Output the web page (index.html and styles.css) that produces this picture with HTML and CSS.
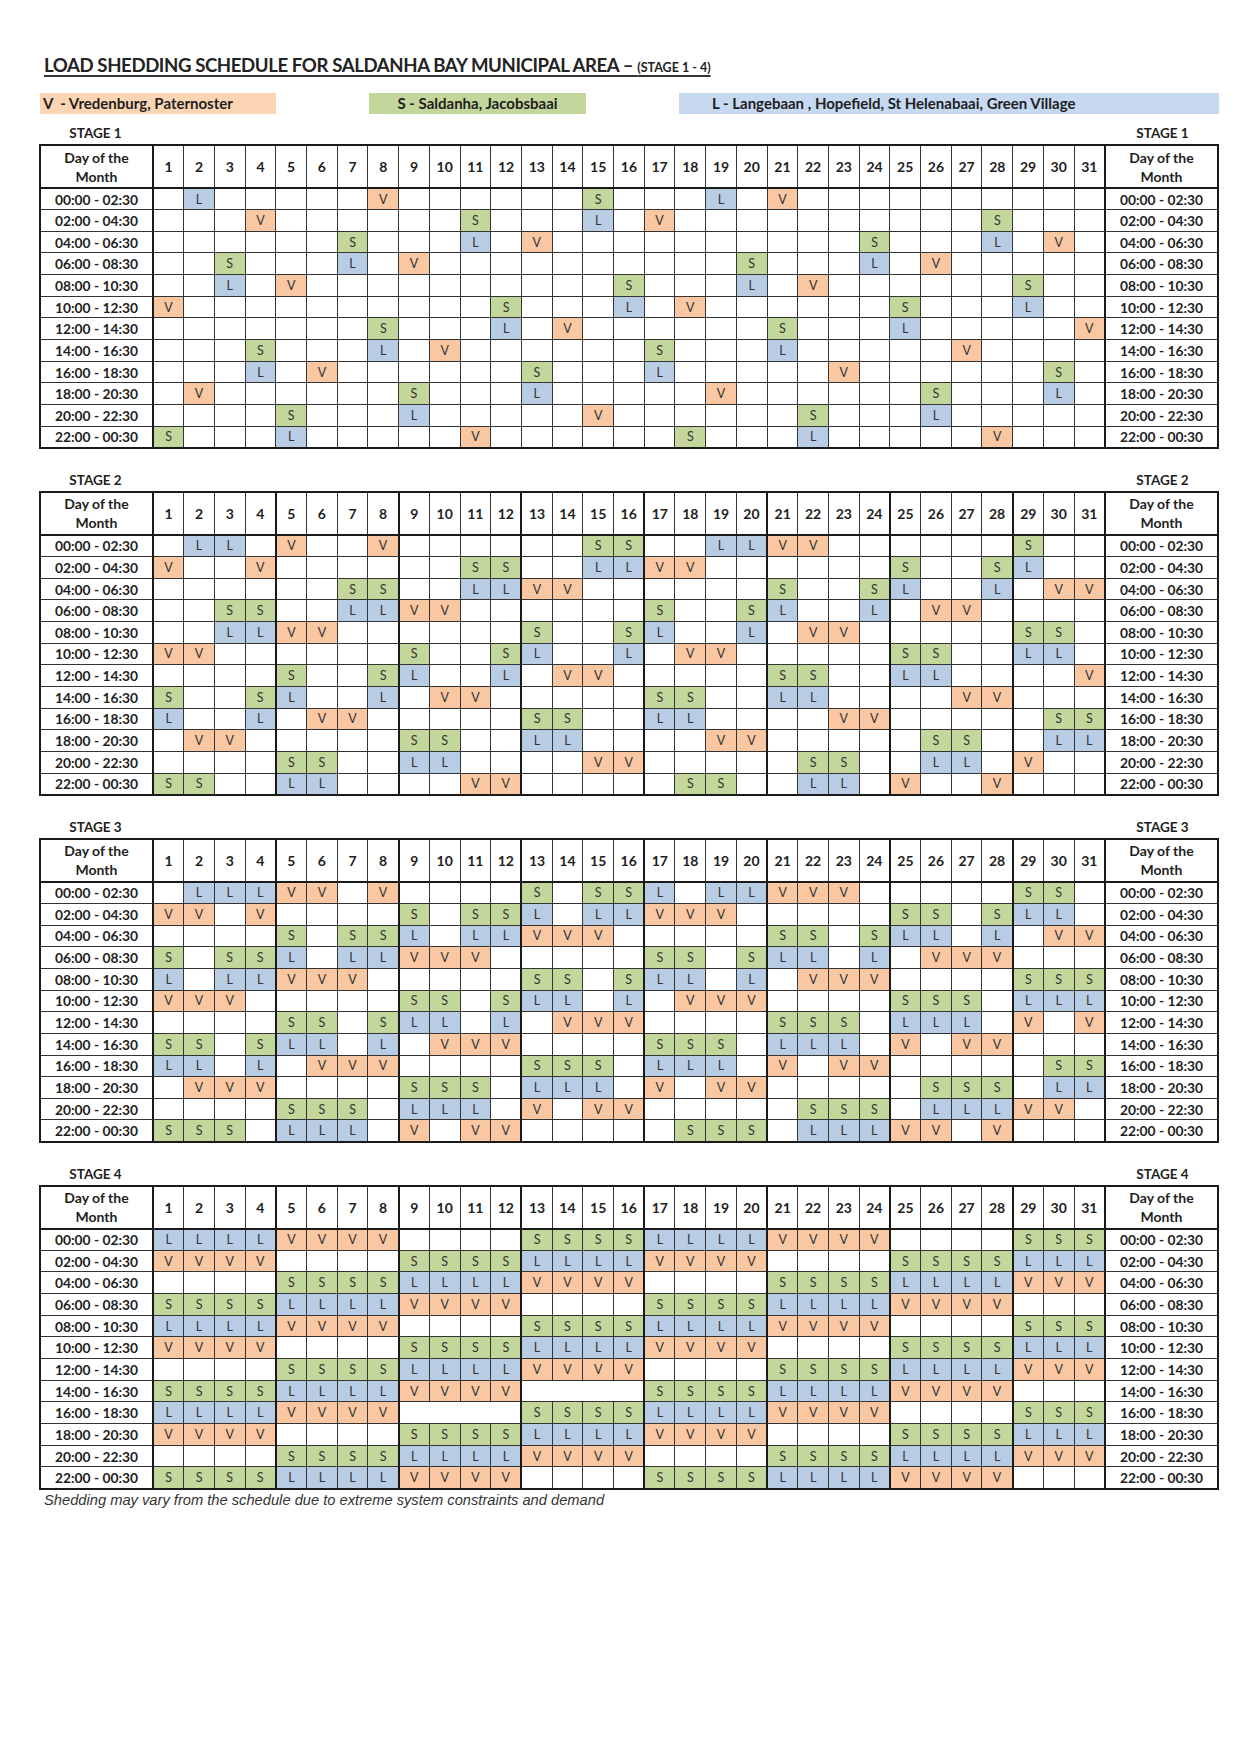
FILE: index.html
```html
<!DOCTYPE html>
<html lang="en">
<head>
<meta charset="utf-8">
<title>Load Shedding Schedule - Saldanha Bay Municipal Area</title>
<link rel="stylesheet" href="styles.css">
</head>
<body>
<main class="page">
  <h1 class="title"><span class="t-main">LOAD SHEDDING SCHEDULE FOR SALDANHA BAY MUNICIPAL AREA – </span><span class="t-sub">(STAGE 1 - 4)</span></h1>
  <div class="legend">
    <div class="lg lg-v">V&nbsp; - Vredenburg, Paternoster</div>
    <div class="lg lg-s">S - Saldanha, Jacobsbaai</div>
    <div class="lg lg-l">L - Langebaan , Hopefield, St Helenabaai, Green Village</div>
  </div>
  <div id="stages" class="stages"></div>
  <p class="note">Shedding may vary from the schedule due to extreme system constraints and demand</p>
</main>
<script src="script.js"></script>
</body>
</html>
```
FILE: styles.css
```css
* { box-sizing: border-box; }

body {
  margin: 0;
  background: #ffffff;
  color: #222222;
  font-family: Lato, "Open Sans", "DejaVu Sans", sans-serif;
}

.page {
  width: 1254px;
  padding: 54px 0 40px 39px;
}

.title {
  margin: 0;
  padding-left: 5px;
  font-size: 18.6px;
  font-weight: 700;
  letter-spacing: -0.4px;
  line-height: 22px;
  color: #222222;
  text-decoration: underline;
  text-decoration-thickness: 2px;
  text-underline-offset: 3px;
  text-decoration-color: #333333;
}

.t-sub {
  font-size: 12.5px;
  letter-spacing: 0;
}

.legend {
  display: flex;
  gap: 93px;
  margin: 14px 0 0 1px;
}

.lg {
  height: 21px;
  line-height: 21px;
  font-size: 15px;
  font-weight: 700;
  color: #1e1e1e;
  white-space: nowrap;
}

.lg-v { width: 236px; background: #fcd5b4; padding-left: 3px; }
.lg-s { width: 217px; background: #c3d69b; text-align: center; }
.lg-l { width: 540px; background: #c6d9f1; padding-left: 33px; }

.stages {
  margin-top: 9px;
}

.stage {
  margin-bottom: 21px;
}

.stage:last-child {
  margin-bottom: 0;
}

.stage-labels {
  display: flex;
  justify-content: space-between;
  width: 1180px;
  height: 20px;
  margin-bottom: 1px;
}

.stage-label {
  width: 113px;
  text-align: center;
  font-size: 13.5px;
  font-weight: 700;
  line-height: 20px;
  color: #1e1e1e;
}

.grid {
  width: 1180px;
  border-collapse: collapse;
  table-layout: fixed;
  border: 2px solid #1a1a1a;
}

.col-lab { width: 113px; }

.grid th,
.grid td {
  border: 1px solid #333333;
  padding: 0;
  text-align: center;
  vertical-align: middle;
  overflow: hidden;
  white-space: nowrap;
}

.grid tr.hd th {
  height: 43px;
  font-size: 14px;
  font-weight: 700;
  color: #1e1e1e;
  border-bottom: 2px solid #1a1a1a;
}

.grid tr.hd th.lab {
  white-space: normal;
  line-height: 19px;
  font-size: 14px;
}

.grid tr.r td {
  height: 21.67px;
}

.grid .lab {
  font-size: 13.8px;
  font-weight: 700;
  color: #1e1e1e;
}

.grid .lab-l { border-right: 2px solid #1a1a1a; }
.grid .lab-r { border-left: 2px solid #1a1a1a; }

.grid td.c {
  font-size: 12.5px;
  font-weight: 400;
  color: #333333;
}

.grouped .gs { border-left: 2px solid #1a1a1a; }

.grid td.v { background: #f9c8a2; }
.grid td.s { background: #c3d69b; }
.grid td.l { background: #b8cce4; }

.note {
  margin: 2px 0 0 5px;
  font-family: "Liberation Sans", Arial, sans-serif;
  font-style: italic;
  font-size: 14.7px;
  line-height: 17px;
  color: #333333;
}
```
FILE: script.js
```js
(function () {
  var times = [
    "00:00 - 02:30", "02:00 - 04:30", "04:00 - 06:30", "06:00 - 08:30",
    "08:00 - 10:30", "10:00 - 12:30", "12:00 - 14:30", "14:00 - 16:30",
    "16:00 - 18:30", "18:00 - 20:30", "20:00 - 22:30", "22:00 - 00:30"
  ];

  var s4 = [
    "1-4L 5-8V 13-16S 17-20L 21-24V 29-31S",
    "1-4V 9-12S 13-16L 17-20V 25-28S 29-31L",
    "5-8S 9-12L 13-16V 21-24S 25-28L 29-31V",
    "1-4S 5-8L 9-12V 17-20S 21-24L 25-28V"
  ];

  var stages = [
    { n: 1, grouped: false, rows: [
      "2L 8V 15S 19L 21V",
      "4V 11S 15L 17V 28S",
      "7S 11L 13V 24S 28L 30V",
      "3S 7L 9V 20S 24L 26V",
      "3L 5V 16S 20L 22V 29S",
      "1V 12S 16L 18V 25S 29L",
      "8S 12L 14V 21S 25L 31V",
      "4S 8L 10V 17S 21L 27V",
      "4L 6V 13S 17L 23V 30S",
      "2V 9S 13L 19V 26S 30L",
      "5S 9L 15V 22S 26L",
      "1S 5L 11V 18S 22L 28V"
    ]},
    { n: 2, grouped: true, rows: [
      "2L 3L 5V 8V 15S 16S 19L 20L 21V 22V 29S",
      "1V 4V 11S 12S 15L 16L 17V 18V 25S 28S 29L",
      "7S 8S 11L 12L 13V 14V 21S 24S 25L 28L 30V 31V",
      "3S 4S 7L 8L 9V 10V 17S 20S 21L 24L 26V 27V",
      "3L 4L 5V 6V 13S 16S 17L 20L 22V 23V 29S 30S",
      "1V 2V 9S 12S 13L 16L 18V 19V 25S 26S 29L 30L",
      "5S 8S 9L 12L 14V 15V 21S 22S 25L 26L 31V",
      "1S 4S 5L 8L 10V 11V 17S 18S 21L 22L 27V 28V",
      "1L 4L 6V 7V 13S 14S 17L 18L 23V 24V 30S 31S",
      "2V 3V 9S 10S 13L 14L 19V 20V 26S 27S 30L 31L",
      "5S 6S 9L 10L 15V 16V 22S 23S 26L 27L 29V",
      "1S 2S 5L 6L 11V 12V 18S 19S 22L 23L 25V 28V"
    ]},
    { n: 3, grouped: true, rows: [
      "2L 3L 4L 5V 6V 8V 13S 15S 16S 17L 19L 20L 21V 22V 23V 29S 30S",
      "1V 2V 4V 9S 11S 12S 13L 15L 16L 17V 18V 19V 25S 26S 28S 29L 30L",
      "5S 7S 8S 9L 11L 12L 13V 14V 15V 21S 22S 24S 25L 26L 28L 30V 31V",
      "1S 3S 4S 5L 7L 8L 9V 10V 11V 17S 18S 20S 21L 22L 24L 26V 27V 28V",
      "1L 3L 4L 5V 6V 7V 13S 14S 16S 17L 18L 20L 22V 23V 24V 29S 30S 31S",
      "1V 2V 3V 9S 10S 12S 13L 14L 16L 18V 19V 20V 25S 26S 27S 29L 30L 31L",
      "5S 6S 8S 9L 10L 12L 14V 15V 16V 21S 22S 23S 25L 26L 27L 29V 31V",
      "1S 2S 4S 5L 6L 8L 10V 11V 12V 17S 18S 19S 21L 22L 23L 25V 27V 28V",
      "1L 2L 4L 6V 7V 8V 13S 14S 15S 17L 18L 19L 21V 23V 24V 30S 31S",
      "2V 3V 4V 9S 10S 11S 13L 14L 15L 17V 19V 20V 26S 27S 28S 30L 31L",
      "5S 6S 7S 9L 10L 11L 13V 15V 16V 22S 23S 24S 26L 27L 28L 29V 30V",
      "1S 2S 3S 5L 6L 7L 9V 11V 12V 18S 19S 20S 22L 23L 24L 25V 26V 28V"
    ]},
    { n: 4, grouped: true, rows: [
      s4[0], s4[1], s4[2], s4[3],
      s4[0], s4[1], s4[2], s4[3] + " 13-16M",
      s4[0] + " 9-12M", s4[1], s4[2], s4[3]
    ]}
  ];

  function el(tag, cls, text) {
    var e = document.createElement(tag);
    if (cls) e.className = cls;
    if (text != null) e.textContent = text;
    return e;
  }

  function parse(spec) {
    var cells = {}, merges = {};
    spec.split(/\s+/).forEach(function (t) {
      if (!t) return;
      var m = /^(\d+)(?:-(\d+))?([LVSM])$/.exec(t);
      var a = +m[1], b = m[2] ? +m[2] : a;
      if (m[3] === "M") { merges[a] = b; }
      else { for (var i = a; i <= b; i++) cells[i] = m[3]; }
    });
    return { cells: cells, merges: merges };
  }

  function groupStart(c) { return c > 1 && (c - 1) % 4 === 0; }

  function headLabel(cls) {
    var th = el("th", "lab " + cls);
    th.appendChild(document.createTextNode("Day of the"));
    th.appendChild(document.createElement("br"));
    th.appendChild(document.createTextNode("Month"));
    return th;
  }

  var host = document.getElementById("stages");

  stages.forEach(function (st) {
    var wrap = el("section", "stage");
    var labs = el("div", "stage-labels");
    labs.appendChild(el("span", "stage-label", "STAGE " + st.n));
    labs.appendChild(el("span", "stage-label", "STAGE " + st.n));
    wrap.appendChild(labs);

    var tbl = el("table", "grid" + (st.grouped ? " grouped" : ""));
    var cg = el("colgroup");
    cg.appendChild(el("col", "col-lab"));
    for (var i = 0; i < 31; i++) cg.appendChild(el("col", "col-day"));
    cg.appendChild(el("col", "col-lab"));
    tbl.appendChild(cg);

    var tb = el("tbody");
    var hr = el("tr", "hd");
    hr.appendChild(headLabel("lab-l"));
    for (var d = 1; d <= 31; d++) {
      hr.appendChild(el("th", groupStart(d) ? "gs" : "", String(d)));
    }
    hr.appendChild(headLabel("lab-r"));
    tb.appendChild(hr);

    st.rows.forEach(function (spec, r) {
      var p = parse(spec);
      var tr = el("tr", "r");
      tr.appendChild(el("td", "lab lab-l", times[r]));
      var c = 1;
      while (c <= 31) {
        var cls = "c" + (groupStart(c) ? " gs" : "");
        if (p.merges[c]) {
          var td = el("td", cls);
          td.colSpan = p.merges[c] - c + 1;
          tr.appendChild(td);
          c = p.merges[c] + 1;
          continue;
        }
        var v = p.cells[c];
        if (v) {
          tr.appendChild(el("td", cls + " " + v.toLowerCase(), v));
        } else {
          tr.appendChild(el("td", cls));
        }
        c++;
      }
      tr.appendChild(el("td", "lab lab-r", times[r]));
      tb.appendChild(tr);
    });

    tbl.appendChild(tb);
    wrap.appendChild(tbl);
    host.appendChild(wrap);
  });
})();
```
